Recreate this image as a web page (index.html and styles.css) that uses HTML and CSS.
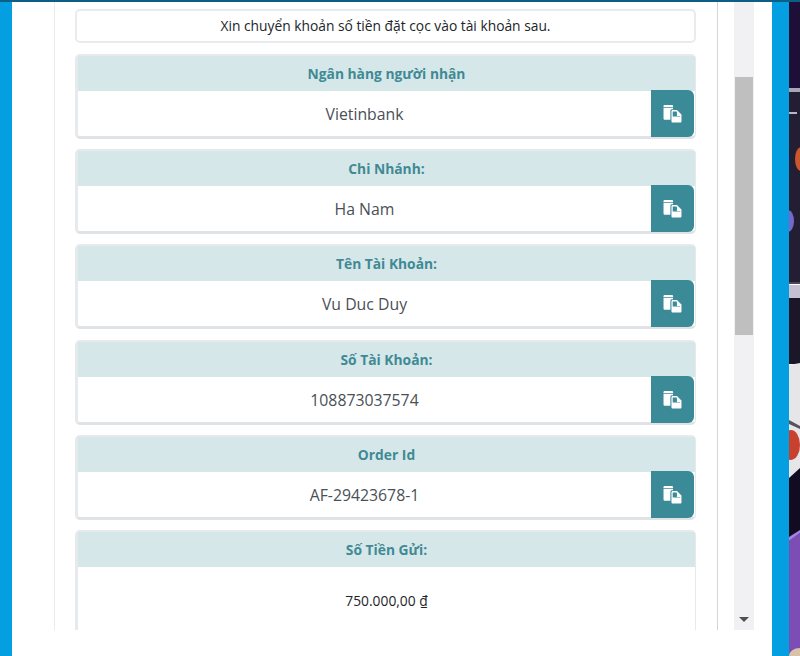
FILE: index.html
```html
<!DOCTYPE html>
<html lang="en">
<head>
  <meta charset="UTF-8" />
  <title>Deposit</title>
  <link rel="stylesheet" href="styles.css">
</head>
<body>
  <svg width="0" height="0" class="defs">
    <symbol id="copy-icon" viewBox="0 0 18 18">
      <path fill="#fff" d="M.5 2.200C.5 1.500 1 1 1.700 1h6.600c.7 0 1.200.5 1.200 1.200V3H.5z"/>
      <path fill="#fff" d="M.5 3.800h9v1.200H8.400C7.600 5 7 5.600 7 6.400V15H1.700C1 15 .5 14.500 .5 13.800z"/>
      <path fill="#fff" d="M8 7c0-.7.500-1.200 1.200-1.200h4L17.500 10v6.300c0 .7-.5 1.200-1.200 1.200H9.200C8.500 17.500 8 17 8 16.300z"/>
      <path fill="#3a8b97" d="M9.200 7H12.300v4.800h4v-.5H13.200V7.300l-.9-.3v4.800H9.200z"/>
    </symbol>
  </svg>

  <div class="page">
    <div class="gutter-left"></div>

    <div class="dialog">
      <div class="scroller">
        <div class="content">
          <div class="note">Xin chuyển khoản số tiền đặt cọc vào tài khoản sau.</div>

          <div class="card">
            <div class="card-title">Ngân hàng người nhận</div>
            <div class="card-row">
              <div class="card-value">Vietinbank</div>
              <button class="copy-btn"><svg width="19" height="19"><use href="#copy-icon"/></svg></button>
            </div>
          </div>

          <div class="card">
            <div class="card-title">Chi Nhánh:</div>
            <div class="card-row">
              <div class="card-value">Ha Nam</div>
              <button class="copy-btn"><svg width="19" height="19"><use href="#copy-icon"/></svg></button>
            </div>
          </div>

          <div class="card">
            <div class="card-title">Tên Tài Khoản:</div>
            <div class="card-row">
              <div class="card-value">Vu Duc Duy</div>
              <button class="copy-btn"><svg width="19" height="19"><use href="#copy-icon"/></svg></button>
            </div>
          </div>

          <div class="card">
            <div class="card-title">Số Tài Khoản:</div>
            <div class="card-row">
              <div class="card-value">108873037574</div>
              <button class="copy-btn"><svg width="19" height="19"><use href="#copy-icon"/></svg></button>
            </div>
          </div>

          <div class="card">
            <div class="card-title">Order Id</div>
            <div class="card-row">
              <div class="card-value">AF-29423678-1</div>
              <button class="copy-btn"><svg width="19" height="19"><use href="#copy-icon"/></svg></button>
            </div>
          </div>

          <div class="card card-amount">
            <div class="card-title">Số Tiền Gửi:</div>
            <div class="amount">750.000,00 <u>₫</u></div>
          </div>
        </div>

        <div class="scrollbar">
          <div class="scrollbar-thumb"></div>
          <div class="scrollbar-arrow"></div>
        </div>
      </div>
    </div>

    <div class="gutter-right"></div>

    <svg class="backdrop" width="11" height="654" viewBox="0 2 11 654" preserveAspectRatio="none">
      <rect x="0" y="0" width="11" height="90" fill="#1e0f38"/>
      <rect x="0" y="88" width="11" height="4" fill="#a9a5b6"/>
      <rect x="0" y="92" width="11" height="190" fill="#231e33"/>
      <rect x="0" y="112" width="8" height="2" fill="#b9b7c6"/>
      <ellipse cx="12" cy="159" rx="6" ry="12" fill="#c9562c"/>
      <ellipse cx="-1" cy="221" rx="6" ry="11" fill="#7667c9"/>
      <rect x="0" y="282" width="11" height="2" fill="#4a4658"/>
      <rect x="0" y="285" width="11" height="13" fill="#c5c1d2"/>
      <rect x="0" y="298" width="11" height="66" fill="#1b1728"/>
      <path fill="#e6e5e8" d="M0 365l11-2v105L0 478z"/>
      <path fill="#56535c" d="M0 420l11 6v3L0 424z"/>
      <ellipse cx="2" cy="445" rx="9" ry="15" fill="#c8412f"/>
      <path fill="#110c22" d="M0 478l11-10v66L0 542z"/>
      <rect x="0" y="478" width="11" height="56" fill="#110c22"/>
      <path fill="#7c4db4" d="M0 541l11-8v123H0z"/>
      <path fill="#a581e4" d="M0 537l11-7v3l-11 8z"/>
      <ellipse cx="11" cy="656" rx="11" ry="8" fill="#d8c3a8"/>
    </svg>
  </div>
</body>
</html>
```

FILE: styles.css
```css
html, body {
  margin: 0;
  padding: 0;
  height: 100%;
  overflow: hidden;
}
body {
  background-color: #fff;
  font-family: "Open Sans", "Noto Sans", sans-serif;
  font-size: 13.8px;
  color: #212529;
}
.defs {
  display: block;
}
.page {
  display: flex;
  height: 656px;
  border-top: 2px solid #0b5f85;
  box-sizing: border-box;
}
.gutter-left {
  width: 12px;
  background-color: #049fe0;
}
.gutter-right {
  width: 17px;
  background-color: #049fe0;
}
.backdrop {
  display: block;
  width: 11px;
}
.dialog {
  width: 760px;
  background-color: #fff;
}
.scroller {
  display: flex;
  height: 628px;
  overflow: hidden;
}
.content {
  width: 621px;
  margin-left: 42px;
  padding: 7px 21px 0 20px;
  border-left: 1px solid #e9edef;
  border-right: 1px solid #d3d6d8;
}
.note {
  height: 30px;
  line-height: 30px;
  text-align: center;
  border: 2px solid #e8ecee;
  border-radius: 5px;
  margin-bottom: 11px;
}
.card {
  border-style: solid;
  border-color: #e6eaec;
  border-bottom-color: #dfe3e6;
  border-width: 2px 1px 3px 3px;
  border-radius: 5px;
  margin-bottom: 10.200px;
}
.card-title {
  height: 35px;
  line-height: 35px;
  text-align: center;
  font-weight: 700;
  color: #3f8a94;
  background-color: #d6e7e9;
}
.card-row {
  display: flex;
  height: 45px;
}
.card-value {
  flex: 1;
  line-height: 47px;
  text-align: center;
  font-size: 15.8px;
  color: #495057;
}
.copy-btn {
  width: 43px;
  margin: -1px 1px -1px 0;
  padding: 0;
  border: none;
  border-radius: 0 6px 6px 0;
  background-color: #3a8b97;
  display: flex;
  align-items: center;
  justify-content: center;
}
.copy-btn svg {
  display: block;
}
.card-amount {
  border-bottom: none;
  border-radius: 5px 5px 0 0;
}
.amount {
  height: 120px;
  padding-top: 24px;
  line-height: 19px;
  text-align: center;
  box-sizing: border-box;
}
.scrollbar {
  position: relative;
  width: 20px;
  margin-left: 16px;
  background-color: #f1f1f3;
}
.scrollbar-thumb {
  width: 18px;
  height: 258px;
  margin: 75px 0 0 1px;
  background-color: #bfbfbf;
}
.scrollbar-arrow {
  position: absolute;
  left: 5px;
  bottom: 8px;
  width: 0;
  height: 0;
  border-left: 5px solid transparent;
  border-right: 5px solid transparent;
  border-top: 5px solid #505050;
}
```
